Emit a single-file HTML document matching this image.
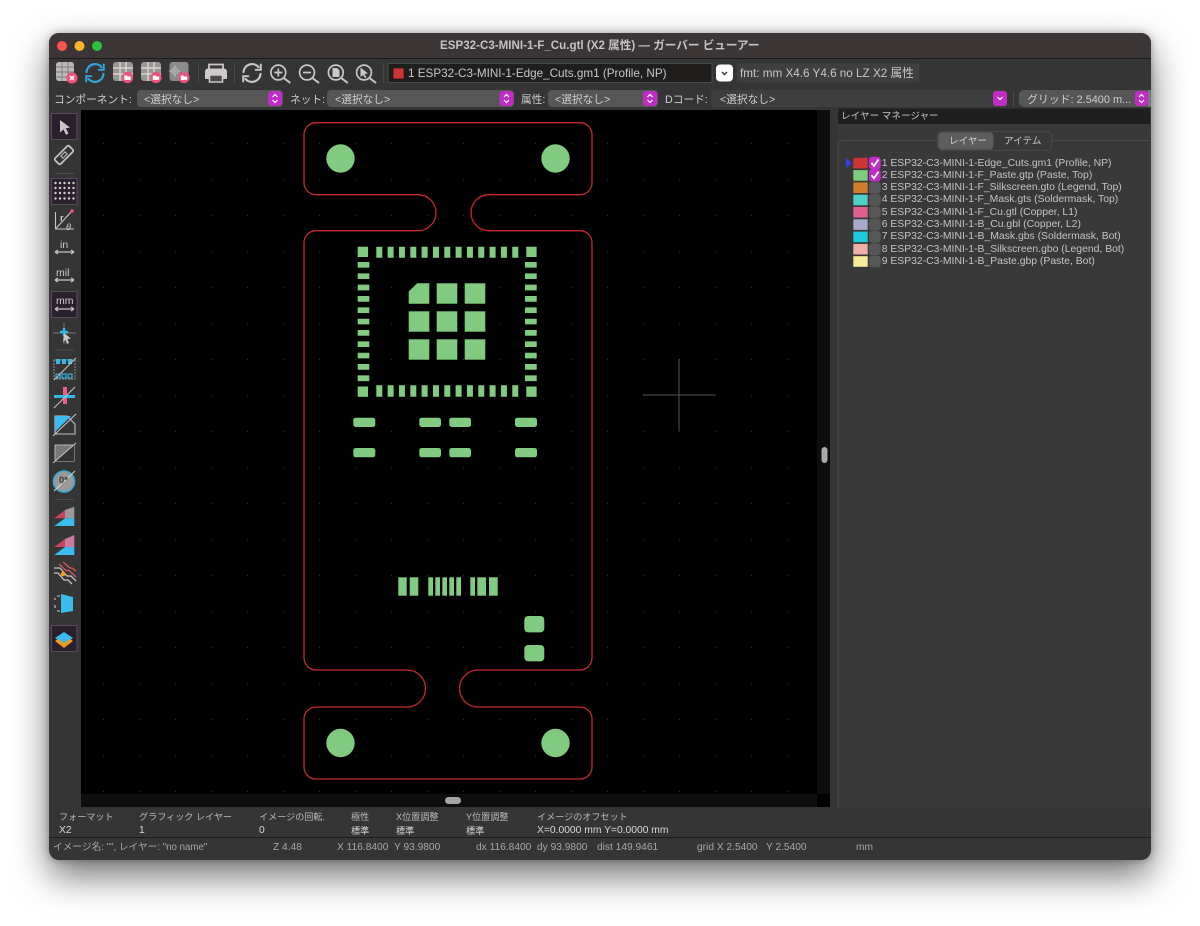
<!DOCTYPE html>
<html lang="ja"><head><meta charset="utf-8"><title>Gerber Viewer</title>
<style>
html,body{margin:0;padding:0;background:#fff;width:1200px;height:926px;overflow:hidden}
body{position:relative;font-family:"Liberation Sans","Noto Sans CJK JP",sans-serif}
.win{position:absolute;left:49px;top:33px;width:1102px;height:827px;border-radius:10px;background:#353535;box-shadow:0 16px 36px rgba(0,0,0,.55),0 0 8px rgba(0,0,0,.3);overflow:hidden}
svg.g{position:absolute;left:0;top:0}
.t{position:absolute;white-space:nowrap;line-height:14px;font-size:10px;color:#c4c4c4}
.s{font-size:11.7px;color:#c8c8c8}
.l{font-size:10.7px;color:#cfcfcf}
.m{font-size:9.100px;color:#bcbcbc}
.v{font-size:10.300px;color:#d8d8d8}
.b{font-size:10.200px;color:#a8a8a8}
.u{font-size:10.500px;color:#d0ccd0}
</style></head><body>
<div class="win"></div>
<svg class="g" width="1200" height="926" viewBox="0 0 1200 926" xmlns="http://www.w3.org/2000/svg">
<defs>
<pattern id="dots" x="103" y="107" width="36" height="36" patternUnits="userSpaceOnUse"><rect x="0" y="0" width="1" height="1" fill="#333"/></pattern>
<g id="tbl"><rect x="0" y="0" width="20" height="19" rx="3" fill="#9a9696"/><path d="M0 6H20M0 12H20M7 0V19M13 0V19" stroke="#d8d4d4" stroke-width="1.4"/></g>
<g id="fold"><circle r="5.6" fill="#e8547c"/><path d="M-3.2-2H-.6L.3-1H3.2V2.4H-3.2Z" fill="#fff"/></g>
<g id="mag" fill="none" stroke="#cbc6c8" stroke-width="1.7"><circle r="7.4"/><path d="M5.5 5.5L12 10.500" stroke-width="2"/></g>
<g id="sync" fill="none" stroke-width="2.2" stroke-linecap="round"><path d="M-8.500-1A8.600 8.600 0 0 1 6.500-6"/><path d="M8.500 1A8.600 8.600 0 0 1-6.500 6"/><path d="M8.800-8.500V-3.200H3.600M-8.800 8.500V3.200H-3.600" stroke-width="1.900"/></g>
</defs>

<!-- title bar -->
<path d="M49 58V43A10 10 0 0 1 59 33H1141A10 10 0 0 1 1151 43V58Z" fill="#3b3536"/>
<rect x="49" y="58" width="1102" height="1" fill="#1c1a1a"/>
<circle cx="62" cy="46" r="5" fill="#f9544d"/><circle cx="79.500" cy="46" r="5" fill="#fbb62b"/><circle cx="97" cy="46" r="5" fill="#2ac33f"/>

<!-- top toolbar icons -->
<rect x="56" y="62" width="18" height="19" rx="3" fill="#bdb8b8"/>
<path d="M56 67H74M56 72H74M56 77H74M62 62V81M68 62V81" stroke="#7f7b7b" stroke-width=".9"/>
<circle cx="72" cy="78" r="5.600" fill="#e8547c"/><path d="M70 76L74 80M74 76L70 80" stroke="#fff" stroke-width="1.500"/>
<use href="#sync" x="95" y="73" stroke="#2fa7dd"/>
<use href="#tbl" x="113" y="62"/><use href="#fold" x="127.500" y="77.500"/>
<use href="#tbl" x="141" y="62"/><use href="#fold" x="156" y="77.500"/>
<rect x="169.500" y="62" width="19" height="19" rx="3" fill="#8d8a8a"/>
<circle cx="175" cy="71" r="3" fill="none" stroke="#b8b4b4" stroke-width="1.200"/><path d="M175 65V77M169 71H181" stroke="#b8b4b4" stroke-width="1"/>
<use href="#fold" x="184" y="77.500"/>
<rect x="198" y="63" width="1" height="20" fill="#474747"/>
<path d="M209 70V64.500H223V70" fill="none" stroke="#cfcacc" stroke-width="1.800"/>
<path d="M208 68.500H224A3 3 0 0 1 227 71.500V79H205V71.500A3 3 0 0 1 208 68.500Z" fill="#cfcacc"/>
<path d="M209.500 75H222.500V82H209.500Z" fill="#4a4a4a" stroke="#cfcacc" stroke-width="1.600"/>
<rect x="234" y="63" width="1" height="20" fill="#474747"/>
<use href="#sync" x="252" y="73" stroke="#cbc6c8"/>
<use href="#mag" x="278.300" y="72.500"/><path d="M274.300 72.500H282.300M278.300 68.500V76.500" stroke="#cbc6c8" stroke-width="1.700"/>
<use href="#mag" x="307" y="72.500"/><path d="M303 72.500H311" stroke="#cbc6c8" stroke-width="1.700"/>
<use href="#mag" x="335.800" y="72.500"/><path d="M332.500 68H337L339.500 70.500V77H332.500Z" fill="#cbc6c8"/>
<use href="#mag" x="364" y="72.500"/><path d="M360.500 67.500L368 73.500L364.500 74L366.500 77.500L365 78L363 75L360.500 77Z" fill="#cbc6c8"/>
<rect x="383" y="63" width="1" height="20" fill="#474747"/>
<rect x="388" y="63.500" width="324" height="19" fill="#201d1d" stroke="#4b4a4a"/>
<rect x="393" y="68" width="11" height="11" fill="#c93535" stroke="#111" stroke-width=".6"/>
<rect x="716" y="64.500" width="17" height="17" rx="4" fill="#fff"/>
<path d="M722 72L724.500 74.500L727 72" fill="none" stroke="#333" stroke-width="1.400"/>
<rect x="737" y="63.500" width="182" height="19" fill="#3f3f3f"/>

<!-- second row combos -->
<rect x="137" y="90" width="146" height="17" rx="4" fill="#565656"/>
<rect x="327" y="90" width="187" height="17" rx="4" fill="#565656"/>
<rect x="548" y="90" width="110" height="17" rx="4" fill="#565656"/>
<rect x="711" y="90" width="296" height="17" rx="4" fill="#3e3e3e"/>
<rect x="1013" y="91" width="1" height="15" fill="#4b4b4b"/>
<path d="M1150 90H1024A5 5 0 0 0 1019 95V102A5 5 0 0 0 1024 107H1150Z" fill="#565656"/>
<g fill="#c02cc4">
<rect x="268" y="91" width="14" height="15" rx="3"/><rect x="499.500" y="91" width="14" height="15" rx="3"/><rect x="643" y="91" width="14" height="15" rx="3"/><rect x="993" y="91" width="14" height="15" rx="3"/><rect x="1135" y="91" width="13" height="15" rx="3"/>
</g>
<g fill="none" stroke="#fff" stroke-width="1.200">
<path d="M272.500 97L275 94.500L277.500 97M272.500 100L275 102.500L277.500 100"/>
<path d="M504 97L506.500 94.500L509 97M504 100L506.500 102.500L509 100"/>
<path d="M647.500 97L650 94.500L652.500 97M647.500 100L650 102.500L652.500 100"/>
<path d="M997.500 97L1000 99.500L1002.500 97"/>
<path d="M1139 97L1141.500 94.500L1144 97M1139 100L1141.500 102.500L1144 100"/>
</g>
<path d="M1148 90H1151V107H1148Z" fill="#777"/>

<!-- canvas -->
<rect x="81" y="110" width="736" height="684" fill="#000"/>
<rect x="81" y="110" width="736" height="684" fill="url(#dots)"/>
<rect x="81" y="794" width="736" height="13" fill="#0d0d0d"/>
<rect x="817" y="110" width="13" height="684" fill="#0d0d0d"/>
<rect x="817" y="794" width="13" height="13" fill="#000"/>
<rect x="821.500" y="447" width="6" height="16" rx="3" fill="#aaa"/>
<rect x="445" y="797" width="16" height="7" rx="3.500" fill="#a5a5a5"/>
<path d="M643 395H715M679 359V431" stroke="#555" stroke-width="1"/>

<!-- board -->
<path d="M316 122.700H580A12 12 0 0 1 592 134.700V182.700A12 12 0 0 1 580 194.700H489A18 18 0 0 0 489 230.700H580A12 12 0 0 1 592 242.700V658A12 12 0 0 1 580 670H478A18.500 18.500 0 0 0 478 707H580A12 12 0 0 1 592 719V767A12 12 0 0 1 580 779H316A12 12 0 0 1 304 767V719A12 12 0 0 1 316 707H407A18.500 18.500 0 0 0 407 670H316A12 12 0 0 1 304 658V242.700A12 12 0 0 1 316 230.700H418A18 18 0 0 0 418 194.700H316A12 12 0 0 1 304 182.700V134.700A12 12 0 0 1 316 122.700Z" fill="none" stroke="#c5292f" stroke-width="1.300"/>
<g fill="#80cb80">
<circle cx="340.500" cy="158.500" r="14.200"/><circle cx="555.500" cy="158.500" r="14.200"/><circle cx="340.500" cy="743" r="14.200"/><circle cx="555.500" cy="743" r="14.200"/>
<rect x="357.700" y="246.700" width="10.300" height="10.300"/><rect x="526.300" y="246.700" width="10.300" height="10.300"/><rect x="357.700" y="386.500" width="10.300" height="10.300"/><rect x="526.300" y="386.500" width="10.300" height="10.300"/>
<path d="M417.200 283.300H429.300V303.700H408.700V291.500Z"/>
<rect x="436.700" y="283.300" width="20.600" height="20.400"/><rect x="464.700" y="283.300" width="20.600" height="20.400"/>
<rect x="408.700" y="311.300" width="20.600" height="20.400"/><rect x="436.700" y="311.300" width="20.600" height="20.400"/><rect x="464.700" y="311.300" width="20.600" height="20.400"/>
<rect x="408.700" y="339.300" width="20.600" height="20.400"/><rect x="436.700" y="339.300" width="20.600" height="20.400"/><rect x="464.700" y="339.300" width="20.600" height="20.400"/>
<rect x="353.300" y="417.700" width="22" height="9.300" rx="2.500"/><rect x="419.300" y="417.700" width="21.700" height="9.300" rx="2.500"/><rect x="449.300" y="417.700" width="21.700" height="9.300" rx="2.500"/><rect x="515" y="417.700" width="22" height="9.300" rx="2.500"/>
<rect x="353.300" y="448" width="22" height="9.300" rx="2.500"/><rect x="419.300" y="448" width="21.700" height="9.300" rx="2.500"/><rect x="449.300" y="448" width="21.700" height="9.300" rx="2.500"/><rect x="515" y="448" width="22" height="9.300" rx="2.500"/>
<rect x="398.300" y="577.300" width="8.400" height="18.400"/><rect x="409.700" y="577.300" width="8.600" height="18.400"/>
<rect x="428.300" y="577.300" width="4.700" height="18.400"/><rect x="435.300" y="577.300" width="4.700" height="18.400"/><rect x="442.300" y="577.300" width="4.700" height="18.400"/><rect x="449.300" y="577.300" width="4.700" height="18.400"/><rect x="456.300" y="577.300" width="4.700" height="18.400"/>
<rect x="470.300" y="577.300" width="4.700" height="18.400"/><rect x="477.300" y="577.300" width="8.700" height="18.400"/><rect x="489" y="577.300" width="8.700" height="18.400"/>
<rect x="524.300" y="616" width="20" height="16.400" rx="4"/><rect x="524.300" y="645" width="20" height="16.400" rx="4"/>
</g>
<g fill="none" stroke="#80cb80">
<path d="M376.300 252.200H519" stroke-width="11" stroke-dasharray="6 5.330"/>
<path d="M376.300 391H519" stroke-width="11.400" stroke-dasharray="6 5.330"/>
<path d="M363.500 262V382" stroke-width="11.600" stroke-dasharray="5.670 5.670"/>
<path d="M530.850 262V382" stroke-width="11.700" stroke-dasharray="5.670 5.670"/>
</g>

<!-- left toolbar -->
<g fill="#2a1f2d" stroke="#5b4a5e">
<rect x="51.500" y="113.500" width="25.500" height="26"/><rect x="51.500" y="178.500" width="25.500" height="26"/><rect x="51.500" y="291.500" width="25.500" height="26"/><rect x="51.500" y="625.500" width="25.500" height="26"/>
</g>
<path d="M60 120L70 127.500L65.800 128.200L68.500 133.500L66 134.700L63.500 129.500L60 132.500Z" fill="#c9c4c8"/>
<g transform="rotate(-45 64 155)"><rect x="54" y="151" width="20" height="8" rx="1.500" fill="none" stroke="#c9c4c8" stroke-width="1.700"/><rect x="61" y="153.500" width="6" height="3" fill="none" stroke="#c9c4c8"/></g>
<g fill="#4d4d4d"><rect x="55" y="173" width="19" height="1"/><rect x="55" y="349.500" width="19" height="1"/><rect x="55" y="499" width="19" height="1"/></g>
<g fill="#d0ccd0">
<circle cx="55.500" cy="183" r="1.200"/><circle cx="60" cy="183" r="1.200"/><circle cx="64.500" cy="183" r="1.200"/><circle cx="69" cy="183" r="1.200"/><circle cx="73.500" cy="183" r="1.200"/>
<circle cx="55.500" cy="188" r="1.200"/><circle cx="60" cy="188" r="1.200"/><circle cx="64.500" cy="188" r="1.200"/><circle cx="69" cy="188" r="1.200"/><circle cx="73.500" cy="188" r="1.200"/>
<circle cx="55.500" cy="193" r="1.200"/><circle cx="60" cy="193" r="1.200"/><circle cx="64.500" cy="193" r="1.200"/><circle cx="69" cy="193" r="1.200"/><circle cx="73.500" cy="193" r="1.200"/>
<circle cx="55.500" cy="198.500" r="1.200"/><circle cx="60" cy="198.500" r="1.200"/><circle cx="64.500" cy="198.500" r="1.200"/><circle cx="69" cy="198.500" r="1.200"/><circle cx="73.500" cy="198.500" r="1.200"/>
</g>
<path d="M55.500 212V229H74M55.500 229L71 212" fill="none" stroke="#c9c4c8" stroke-width="1.100"/>
<circle cx="72" cy="211" r="1.800" fill="#e8547c"/>
<g fill="none" stroke="#c9c4c8" stroke-width="1.200">
<path d="M55 252H74M55 252L58 250M55 252L58 254M74 252L71 250M74 252L71 254"/>
<path d="M55 280H74M55 280L58 278M55 280L58 282M74 280L71 278M74 280L71 282"/>
<path d="M55 309H74M55 309L58 307M55 309L58 311M74 309L71 307M74 309L71 311"/>
</g>
<path d="M64 323V344M53 333H76" stroke="#7a7a7a" stroke-width="1"/>
<path d="M60 332H68M64 328V336" stroke="#35b7ea" stroke-width="2.400"/>
<path d="M64 333L71 338.500L67.500 339L69 343L67 344L65.500 340L63 342Z" fill="#c9c4c8"/>
<!-- drc/dcode -->
<rect x="54" y="360" width="21" height="19" fill="none" stroke="#888" stroke-width="1" stroke-dasharray="2 1"/>
<g fill="#35b7ea"><rect x="56" y="359" width="4" height="5"/><rect x="62" y="359" width="4" height="5"/><rect x="68" y="359" width="4" height="5"/></g>
<g fill="none" stroke="#35b7ea" stroke-width="1.100"><rect x="56" y="374" width="4" height="4"/><rect x="62" y="374" width="4" height="4"/><rect x="68" y="374" width="4" height="4"/></g>
<path d="M54 380L76 358" stroke="#c9c4c8" stroke-width="1"/>
<rect x="63" y="387" width="4" height="17" fill="#ee5f82"/><rect x="54" y="395" width="21" height="3" fill="#35b7ea"/><path d="M54 408L75 387" stroke="#c9c4c8" stroke-width="1"/>
<path d="M55 416H67L75 424V434H55Z" fill="none" stroke="#a9a5a7" stroke-width="1.300"/>
<path d="M55 416H71L55 432Z" fill="#3cbcee"/><path d="M53 436L76 414" stroke="#c9c4c8" stroke-width="1"/>
<rect x="55" y="445" width="19" height="16" fill="#777" stroke="#b5b1b3"/><path d="M55 461L74 445V461Z" fill="#333"/><path d="M53 463L76 443" stroke="#c9c4c8" stroke-width="1"/>
<circle cx="64" cy="481.500" r="10.500" fill="#9a9a9a" stroke="#35a9d8" stroke-width="1.600"/><path d="M54 491L75 471" stroke="#d8d4d4" stroke-width="1"/>
<path d="M54.300 518.300L65 510V518.300Z" fill="#c9415b"/><path d="M65 510L74.300 506.700V518.300H65Z" fill="#999"/><path d="M54.300 526L65 518.300H74.300V526Z" fill="#3cbcee"/>
<path d="M54.300 547L65 539V547Z" fill="#c9415b"/><path d="M65 539L74.300 535V547H65Z" fill="#c97ba0"/><path d="M54.300 555L65 547H74.300V555Z" fill="#3cbcee"/>
<g fill="none" stroke-width="1.300"><path d="M59 564L66 570.500H69L76 577" stroke="#d8565f"/><path d="M63 562L70 568H72L76 571" stroke="#d8565f"/><path d="M54 568H60L67 576H71L76 581" stroke="#c9c4c8"/><path d="M54 573H58L64 580H68L72 584" stroke="#c9c4c8"/></g>
<circle cx="63" cy="574" r="2.300" fill="#ef9a20"/>
<path d="M61 594L73 597V611L61 613Z" fill="#3cbcee"/>
<path d="M57 596H60M55 598V600M55 605V608M57 611H60" stroke="#c9c4c8" stroke-width="1.100" fill="none"/>
<path d="M64 632L73 638L64 644L55 638Z" fill="#3cbcee"/><path d="M55 641L58 639L64 643L70 639L73 641L64 648Z" fill="#ef9a20"/>

<!-- right panel -->
<rect x="838" y="110" width="313" height="698" fill="#393939"/>
<rect x="838" y="108.500" width="312" height="15.500" fill="#1f1f1f"/>
<path d="M1150 140.500H842A5 5 0 0 0 838 145V808" fill="none" stroke="#4a4a4a"/>
<rect x="937.700" y="131.700" width="114" height="18.600" rx="5" fill="#393939" stroke="#4b4b4b"/>
<rect x="938.500" y="132.500" width="55" height="17" rx="4" fill="#5d5d5d"/>
<path d="M846 158V168L852 163Z" fill="#3a3aef"/>
<rect x="853.300" y="157.800" width="14.400" height="10.600" fill="#cc3535"/>
<rect x="853.300" y="170.100" width="14.400" height="10.600" fill="#7fcb80"/>
<rect x="853.300" y="182.400" width="14.400" height="10.600" fill="#cf7f2c"/>
<rect x="853.300" y="194.700" width="14.400" height="10.600" fill="#4fcfc8"/>
<rect x="853.300" y="207" width="14.400" height="10.600" fill="#e0608f"/>
<rect x="853.300" y="219.300" width="14.400" height="10.600" fill="#a8a8cc"/>
<rect x="853.300" y="231.600" width="14.400" height="10.600" fill="#1fcadc"/>
<rect x="853.300" y="243.900" width="14.400" height="10.600" fill="#ecb0a4"/>
<rect x="853.300" y="256.200" width="14.400" height="10.600" fill="#f5eb9a"/>
<g fill="#565656">
<rect x="869" y="181.800" width="11.700" height="11.800" rx="3"/><rect x="869" y="194.100" width="11.700" height="11.800" rx="3"/><rect x="869" y="206.400" width="11.700" height="11.800" rx="3"/><rect x="869" y="218.700" width="11.700" height="11.800" rx="3"/><rect x="869" y="231" width="11.700" height="11.800" rx="3"/><rect x="869" y="243.300" width="11.700" height="11.800" rx="3"/><rect x="869" y="255.600" width="11.700" height="11.800" rx="3"/>
</g>
<rect x="869" y="156.700" width="11.700" height="12.500" rx="3" fill="#c22cc6"/><rect x="869" y="169" width="11.700" height="12.500" rx="3" fill="#c22cc6"/>
<path d="M871.500 163L874 166L878.500 159.500M871.500 175.300L874 178.300L878.500 171.800" fill="none" stroke="#fff" stroke-width="1.800"/>

<!-- bottom -->
<rect x="49" y="837" width="1102" height="1" fill="#1c1c1c"/>
</svg>

<span class="t" style="left:440px;top:39px;font-size:11.600px;font-weight:bold;color:#c6c2c3">ESP32-C3-MINI-1-F_Cu.gtl (X2 属性) — ガーバー ビューアー</span>
<span class="t s" style="left:408px;top:66.500px">1 ESP32-C3-MINI-1-Edge_Cuts.gm1 (Profile, NP)</span>
<span class="t s" style="left:740px;top:66.500px">fmt: mm X4.6 Y4.6 no LZ X2 属性</span>
<span class="t l" style="left:54px;top:92.500px">コンポーネント:</span>
<span class="t l" style="left:144px;top:92.500px">&lt;選択なし&gt;</span>
<span class="t l" style="left:290px;top:92.500px">ネット:</span>
<span class="t l" style="left:335px;top:92.500px">&lt;選択なし&gt;</span>
<span class="t l" style="left:521px;top:92.500px">属性:</span>
<span class="t l" style="left:555px;top:92.500px">&lt;選択なし&gt;</span>
<span class="t l" style="left:665px;top:92.500px">Dコード:</span>
<span class="t l" style="left:720px;top:92.500px">&lt;選択なし&gt;</span>
<span class="t l" style="left:1027px;top:92.500px;font-size:10.900px">グリッド: 2.5400 m...</span>
<span class="t u" style="left:60px;top:238px">in</span>
<span class="t u" style="left:56px;top:266px">mil</span>
<span class="t u" style="left:56px;top:294px">mm</span>
<span class="t" style="left:60px;top:211px;font-size:9px;font-weight:bold;color:#d0ccd0">r</span>
<span class="t" style="left:66px;top:220px;font-size:9px;font-style:italic;color:#d0ccd0">θ</span>
<span class="t" style="left:59px;top:474px;font-size:9.500px;font-weight:bold;color:#3a3a3a">0*</span>
<span class="t" style="left:841px;top:110px;font-size:9.600px;color:#c8c8c8">レイヤー マネージャー</span>
<span class="t" style="left:949px;top:134.500px;font-size:9.600px;color:#d0d0d0">レイヤー</span>
<span class="t" style="left:1004px;top:134.500px;font-size:9.600px;color:#c8c8c8">アイテム</span>
<span class="t" style="left:881.700px;top:156.500px;font-size:10.400px">1 ESP32-C3-MINI-1-Edge_Cuts.gm1 (Profile, NP)</span>
<span class="t" style="left:881.700px;top:168.800px;font-size:10.400px">2 ESP32-C3-MINI-1-F_Paste.gtp (Paste, Top)</span>
<span class="t" style="left:881.700px;top:181.100px;font-size:10.400px">3 ESP32-C3-MINI-1-F_Silkscreen.gto (Legend, Top)</span>
<span class="t" style="left:881.700px;top:193.400px;font-size:10.400px">4 ESP32-C3-MINI-1-F_Mask.gts (Soldermask, Top)</span>
<span class="t" style="left:881.700px;top:205.700px;font-size:10.400px">5 ESP32-C3-MINI-1-F_Cu.gtl (Copper, L1)</span>
<span class="t" style="left:881.700px;top:218px;font-size:10.400px">6 ESP32-C3-MINI-1-B_Cu.gbl (Copper, L2)</span>
<span class="t" style="left:881.700px;top:230.300px;font-size:10.400px">7 ESP32-C3-MINI-1-B_Mask.gbs (Soldermask, Bot)</span>
<span class="t" style="left:881.700px;top:242.600px;font-size:10.400px">8 ESP32-C3-MINI-1-B_Silkscreen.gbo (Legend, Bot)</span>
<span class="t" style="left:881.700px;top:254.900px;font-size:10.400px">9 ESP32-C3-MINI-1-B_Paste.gbp (Paste, Bot)</span>

<span class="t m" style="left:59px;top:809.500px">フォーマット</span>
<span class="t m" style="left:139px;top:809.500px">グラフィック レイヤー</span>
<span class="t m" style="left:259px;top:809.500px">イメージの回転.</span>
<span class="t m" style="left:351px;top:809.500px">極性</span>
<span class="t m" style="left:396px;top:809.500px">X位置調整</span>
<span class="t m" style="left:466px;top:809.500px">Y位置調整</span>
<span class="t m" style="left:537px;top:809.500px">イメージのオフセット</span>
<span class="t v" style="left:59px;top:824px">X2</span>
<span class="t v" style="left:139px;top:824px">1</span>
<span class="t v" style="left:259px;top:824px">0</span>
<span class="t v" style="left:351px;top:824px;font-size:9.100px">標準</span>
<span class="t v" style="left:396px;top:824px;font-size:9.100px">標準</span>
<span class="t v" style="left:466px;top:824px;font-size:9.100px">標準</span>
<span class="t v" style="left:537px;top:824px">X=0.0000 mm Y=0.0000 mm</span>
<span class="t b" style="left:53px;top:841px;font-size:9.700px">イメージ名: "", レイヤー: "no name"</span>
<span class="t b" style="left:273px;top:841px">Z 4.48</span>
<span class="t b" style="left:337px;top:841px">X 116.8400</span>
<span class="t b" style="left:394px;top:841px">Y 93.9800</span>
<span class="t b" style="left:476px;top:841px">dx 116.8400</span>
<span class="t b" style="left:537px;top:841px">dy 93.9800</span>
<span class="t b" style="left:597px;top:841px">dist 149.9461</span>
<span class="t b" style="left:697px;top:841px">grid X 2.5400</span>
<span class="t b" style="left:766px;top:841px">Y 2.5400</span>
<span class="t b" style="left:856px;top:841px">mm</span>
</body></html>
